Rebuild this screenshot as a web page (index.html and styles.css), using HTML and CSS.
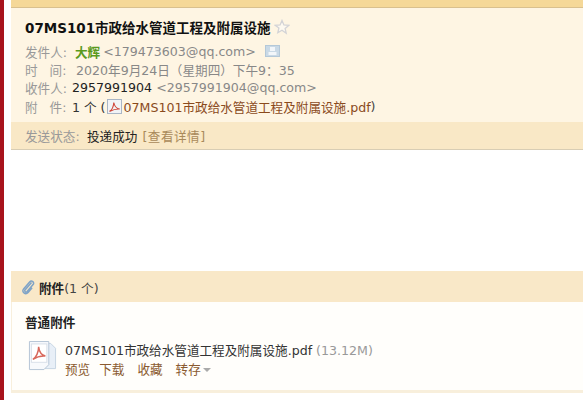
FILE: index.html
```html
<!DOCTYPE html>
<html lang="zh-CN">
<head>
    <meta charset="UTF-8" />
    <title>07MS101市政给水管道工程及附属设施</title>
    <link rel="stylesheet" href="styles.css">
</head>
<body>
    <div class="side-bar"></div>
    <div class="mail">
        <div class="top-band"></div>

        <div class="mail-head">
            <h1 class="subject">07MS101市政给水管道工程及附属设施
                <svg class="star" width="16" height="16" viewBox="0 0 16 16"><path d="M8 1.500l1.900 4.500 4.800.4-3.600 3.100 1.100 4.700L8 11.200l-4.200 2.500 1.100-4.700L1.300 6.400l4.800-.4z" fill="#fdf9f0" stroke="#d3d3d6" stroke-width="1.300"/></svg>
            </h1>
            <div class="row">
                <span class="label">发件人:</span>
                <b class="sender">大辉</b>
                <span class="muted addr">&lt;179473603@qq.com&gt;</span>
                <svg class="card-icon" width="15" height="12" viewBox="0 0 15 12"><rect x="0.500" y="0.500" width="14" height="11" fill="#c9d9e6" stroke="#b4c8d8"/><rect x="5" y="2" width="5" height="4" fill="#f2f6fa"/><rect x="3.500" y="7" width="8" height="3" fill="#f2f6fa"/></svg>
            </div>
            <div class="row">
                <span class="label label-time">时&nbsp;&nbsp;&nbsp;间:</span>
                <span class="muted">2020年9月24日（星期四）下午9：35</span>
            </div>
            <div class="row">
                <span class="label">收件人:</span>
                <span class="dark">2957991904</span>
                <span class="muted addr">&lt;2957991904@qq.com&gt;</span>
            </div>
            <div class="row">
                <span class="label">附&nbsp;&nbsp;&nbsp;件:</span>
                <span class="count">1 个 (</span>
                <svg class="pdf-small" width="15" height="15" viewBox="0 0 15 15"><rect x="0.500" y="0.500" width="14" height="14" fill="#f1f3f6" stroke="#a9b6c6"/><path d="M2.500 12.500c2.500-1.500 4-5 4.300-9 .6 3.500 2.300 6 6 6.500-3.500-.2-7 .7-10.300 2.500z" fill="none" stroke="#d0483c" stroke-width="1.100"/></svg>
                <span class="file-link">07MS101市政给水管道工程及附属设施.pdf</span><span class="paren">)</span>
            </div>
        </div>

        <div class="status">
            <span class="label">发送状态:</span>
            <span class="status-text">投递成功</span>
            <span class="detail">[查看详情]</span>
        </div>

        <div class="mail-body"></div>

        <div class="attach">
            <div class="attach-head">
                <svg class="clip" width="14" height="16" viewBox="0 0 14 16"><path d="M10.500 3.500l-6.500 7.500c-1 1.300 1 2.800 2.100 1.600l6-7c1.800-2.300-1.500-4.900-3.500-2.700l-6 7c-2.500 3.200 2 6.300 4.500 3.500l4-4.600" fill="none" stroke="#7fa3c7" stroke-width="1.500"/></svg>
                <b>附件</b><span>(1 个)</span>
            </div>
            <div class="attach-body">
                <h3 class="attach-type">普通附件</h3>
                <div class="attach-item">
                    <svg class="pdf-big" width="29" height="33" viewBox="0 0 30 34"><path d="M6.500 3.500h17l5 5v21h-22z" fill="#e8eff7" stroke="#c5d3e2"/><path d="M1.500 1.500h20v24l-5 5h-15z" fill="#f7f9fc" stroke="#b4c4d6"/><rect x="3.500" y="4" width="16" height="19" fill="#fff" stroke="#d8dfe8"/><path d="M5 20c3.500-2 6-7.500 6-13 .6 5 3 8.500 7 9.500-4.500-.4-9 .8-13 3.500z" fill="none" stroke="#d8685c" stroke-width="1.500"/></svg>
                    <div class="attach-info">
                        <div class="attach-name">07MS101市政给水管道工程及附属设施.pdf <span class="size">(13.12M)</span></div>
                        <div class="actions">
                            <span class="preview">预览</span>
                            <span>下载</span>
                            <span>收藏</span>
                            <span>转存<i class="caret"></i></span>
                        </div>
                    </div>
                </div>
            </div>
        </div>
    </div>
</body>
</html>
```

FILE: styles.css
```css
* {
    margin: 0;
    padding: 0;
    box-sizing: border-box;
}

html, body {
    height: 400px;
    overflow: hidden;
}

body {
    display: flex;
    background-color: #fff;
    font-family: "DejaVu Sans", "Noto Sans CJK SC", sans-serif;
    font-size: 12.6px;
    color: #333;
}

.side-bar {
    width: 4px;
    background-color: #a8131c;
    flex: none;
}

.mail {
    flex: 1;
    margin-left: 7px;
    min-width: 0;
}

.top-band {
    height: 8px;
    background-color: #f5d898;
    border-bottom: 1px solid #d9c08e;
}

.mail-head {
    height: 114px;
    background-color: #fef5e3;
    padding: 9px 0 0 14px;
}

.subject {
    display: flex;
    align-items: center;
    gap: 3px;
    height: 20px;
    margin-bottom: 5px;
    font-size: 13.5px;
    font-weight: bold;
    color: #111;
    white-space: nowrap;
}

.row {
    display: flex;
    align-items: center;
    height: 18.4px;
    white-space: nowrap;
    color: #888;
}

.label {
    color: #999;
    width: 47px;
    flex: none;
}

.label-time {
    width: 51px;
}

.sender {
    color: #5a9a1e;
    margin-left: 3px;
    margin-right: 3px;
}

.muted {
    color: #888;
}

.addr {
    margin-right: 9px;
}

.dark {
    color: #222;
    margin-right: 4px;
}

.count {
    color: #333;
    margin-right: 1px;
}

.card-icon {
    flex: none;
}

.pdf-small {
    flex: none;
    margin-right: 2px;
}

.file-link {
    color: #8a4a1c;
}

.paren {
    color: #444;
}

.status {
    display: flex;
    align-items: center;
    height: 28px;
    padding-left: 14px;
    background-color: #f9e8c6;
    border-bottom: 1px solid #d8cdb4;
}

.status .label {
    width: 62px;
}

.status-text {
    color: #222;
    margin-right: 5px;
}

.detail {
    color: #a98a5a;
    letter-spacing: 0.5px;
}

.mail-body {
    height: 121px;
}

.attach {
    background-color: #f8efdc;
    padding-bottom: 3px;
}

.attach-head {
    display: flex;
    align-items: center;
    height: 31px;
    padding: 1px 0 0 10px;
    background-color: #f9e8c8;
    color: #444;
}

.clip {
    margin-right: 4px;
}

.attach-head b {
    color: #222;
}

.attach-body {
    height: 88px;
    margin-left: 1px;
    background-color: #fffefb;
    padding: 10px 0 0 13px;
}

.attach-type {
    font-size: 12.6px;
    font-weight: bold;
    color: #222;
    margin-bottom: 9px;
}

.attach-item {
    display: flex;
    gap: 8px;
    padding-left: 3px;
}

.attach-name {
    color: #333;
    white-space: nowrap;
    height: 19px;
}

.size {
    color: #999;
}

.actions {
    display: flex;
    gap: 13px;
    color: #8a5a30;
}

.preview {
    margin-right: -4px;
}

.caret {
    display: inline-block;
    margin-left: 2px;
    vertical-align: 2px;
    border-style: solid;
    border-width: 4px 4px 0;
    border-color: #aaa transparent transparent;
}
```
